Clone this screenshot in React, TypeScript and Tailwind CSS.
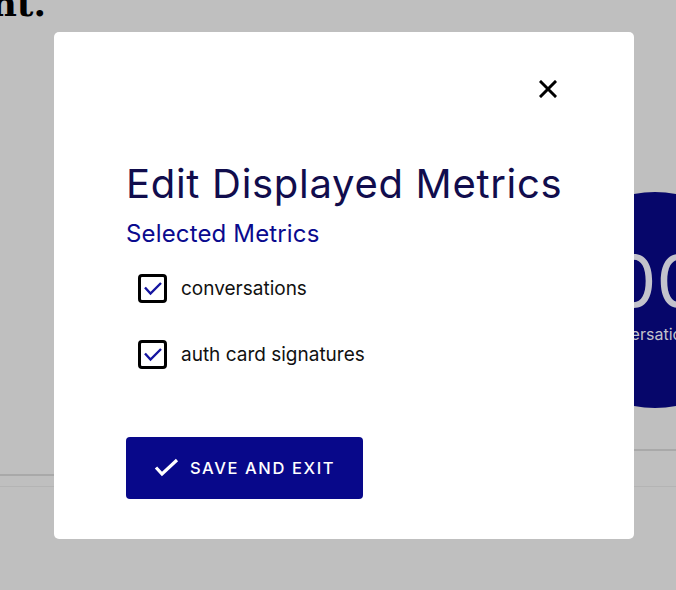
export default function App() {
  return (
    <div className="relative w-[676px] h-[590px] overflow-hidden bg-[#bfbfbf]" style={{ fontFamily: "Inter, 'Noto Sans', sans-serif" }}>
      {/* background page */}
      <div className="flex flex-col">
        <div className="w-[46px] h-[30px] overflow-hidden flex justify-end items-start">
          <span className="whitespace-nowrap text-[36px] leading-none font-bold text-black mt-[-15px]" style={{ fontFamily: "'DejaVu Serif', serif" }}>
            Engagement.
          </span>
        </div>
        <div className="flex mt-[162px]">
          <div className="ml-auto mr-[-87px] w-[216px] h-[216px] rounded-full bg-[#06066a] shrink-0 flex flex-col items-center justify-center">
            <span className="text-[72px] leading-none text-[#c3c3cc] mt-[-14px]">1,000</span>
            <span className="text-[16px] leading-none text-[#c3c3cc] mt-[9px] mr-[16px]">conversations</span>
          </div>
        </div>
        <div className="flex items-start">
          <div className="flex-1 mt-[66px] h-[2px] bg-[#a9a9a9]" />
          <div className="flex-1 mt-[41px] h-[2px] bg-[#a9a9a9]" />
        </div>
        <div className="mt-[10px] h-[1px] bg-[#b4b4b4]" />
      </div>

      {/* modal */}
      <div className="absolute left-[54px] top-[32px] w-[580px] h-[507px] bg-white rounded-[5px] flex flex-col">
        <div className="flex justify-end pt-[48px] pr-[77px]">
          <svg width="18" height="18" viewBox="0 0 18 18">
            <path d="M2 2 L16 16 M16 2 L2 16" stroke="#000" strokeWidth="3" strokeLinecap="square" />
          </svg>
        </div>
        <div className="pl-[72px] mt-[62px]">
          <h2 className="text-[40px] leading-[48px] tracking-[0.7px] text-[#110d4d] font-normal whitespace-nowrap">Edit Displayed Metrics</h2>
          <h3 className="mt-[12px] text-[24px] leading-[28px] tracking-[0.15px] text-[#0a0a8e] whitespace-nowrap">Selected Metrics</h3>
          <div className="flex flex-col gap-[37px] mt-[26px] ml-[12px]">
            {["conversations", "auth card signatures"].map((t) => (
              <div key={t} className="flex items-center gap-[14px] h-[29px]">
                <div className="w-[29px] h-[29px] border-[3px] border-black rounded-[4px] flex items-center justify-center shrink-0">
                  <svg width="23" height="23" viewBox="0 0 23 23">
                    <path d="M4 10.5 L9.5 16.5 L20 6" fill="none" stroke="#1515a0" strokeWidth="2.4" />
                  </svg>
                </div>
                <span className="text-[19px] leading-none text-[#111]">{t}</span>
              </div>
            ))}
          </div>
          <button className="mt-[68px] w-[237px] h-[62px] bg-[#08088a] rounded-[4px] flex items-center justify-center gap-[10px] text-white">
            <svg width="26" height="20" viewBox="0 0 26 20">
              <path d="M2 9.5 L8 16 L23 2" fill="none" stroke="#fff" strokeWidth="3.2" />
            </svg>
            <span className="text-[16.5px] leading-none font-medium tracking-[1.6px]">SAVE AND EXIT</span>
          </button>
        </div>
      </div>
    </div>
  );
}
